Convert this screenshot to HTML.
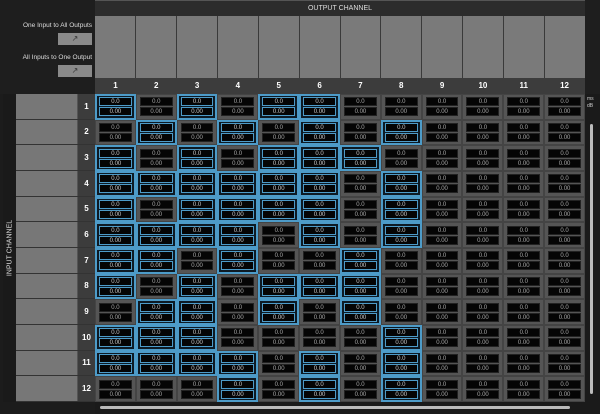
<!DOCTYPE html>
<html><head><style>
*{margin:0;padding:0;box-sizing:border-box}
body{width:600px;height:414px;background:#1c1c1c;font-family:"Liberation Sans",sans-serif;position:relative;overflow:hidden}
.a{position:absolute}
#tl{left:0;top:0;width:95px;height:94px;background:#1e1e1e}
.lbl{color:#ddd;font-size:6.5px;left:0;width:92px;text-align:right;white-space:nowrap}
.btn{width:34px;height:12px;background:#8a8a8a;left:58px;color:#333;font-size:8px;text-align:center;line-height:12px}
#hdr{left:95px;top:0;width:490px;height:16px;background:#2c2c2c;color:#ddd;font-size:7px;text-align:center;line-height:16px;border-top:1px solid #555}
#names{left:95px;top:16px;width:490px;height:62px;display:grid;grid-template-columns:repeat(12,1fr);gap:1px;background:#3a3a3a}
#names div{background:#7a7a7a}
#nums{left:95px;top:78px;width:490px;height:16px;display:grid;grid-template-columns:repeat(12,1fr);background:#3c3c3c;color:#fff;font-size:8px;font-weight:bold;text-align:center;line-height:16px}
#ic{left:3px;top:94px;width:13px;height:308px;background:#1a1a1a;color:#ddd;font-size:7px}
#ic span{position:absolute;left:50%;top:50%;transform:translate(-50%,-50%) rotate(-90deg);white-space:nowrap}
#rn{left:16px;top:94px;width:79px;height:308px;display:grid;grid-template-rows:repeat(12,1fr);background:#3c3c3c}
#rn div{display:flex;border-bottom:1px solid #333}
#rn div i{width:62px;background:#777;border-right:1px solid #555}
#rn div b{flex:1;color:#fff;font-size:8px;text-align:center;align-self:center}
#g{left:95px;top:94px;width:490px;height:308px;display:grid;grid-template-columns:repeat(12,1fr);grid-template-rows:repeat(12,1fr);background:#3a3a3a}
#g i{display:flex;flex-direction:column;justify-content:space-around;padding:2px 3px;background:#555;border:1px solid #444;font-style:normal}
#g b{display:block;background:#050505;height:9px;color:#aaa;font-size:6px;font-weight:normal;text-align:center;line-height:9px;border:1px solid #222}
#g i.s{background:#0d1a24;border:2px solid #4d9bc8;padding:1px 2px}
#g i.s b{border:1px solid #4d9bc8;color:#ccc}
#rs{left:585px;top:94px;width:15px;height:320px;background:#1a1a1a}
#bs{left:95px;top:402px;width:490px;height:12px;background:#1a1a1a}
</style></head><body>
<div class="a" id="tl"></div>
<div class="a lbl" style="top:22px">One Input to All Outputs</div>
<div class="a btn" style="top:33px">&#x2197;</div>
<div class="a lbl" style="top:54px">All Inputs to One Output</div>
<div class="a btn" style="top:65px">&#x2197;</div>
<div class="a" id="hdr">OUTPUT CHANNEL</div>
<div class="a" style="left:585px;top:0;width:15px;height:94px;background:#1e1e1e"></div>
<div class="a" id="names"><div></div><div></div><div></div><div></div><div></div><div></div><div></div><div></div><div></div><div></div><div></div><div></div></div>
<div class="a" id="nums"><div>1</div><div>2</div><div>3</div><div>4</div><div>5</div><div>6</div><div>7</div><div>8</div><div>9</div><div>10</div><div>11</div><div>12</div></div>
<div class="a" id="ic"><span>INPUT CHANNEL</span></div>
<div class="a" id="rn"><div><i></i><b>1</b></div><div><i></i><b>2</b></div><div><i></i><b>3</b></div><div><i></i><b>4</b></div><div><i></i><b>5</b></div><div><i></i><b>6</b></div><div><i></i><b>7</b></div><div><i></i><b>8</b></div><div><i></i><b>9</b></div><div><i></i><b>10</b></div><div><i></i><b>11</b></div><div><i></i><b>12</b></div></div>
<div class="a" id="g">
<i class=s><b>0.0</b><b>0.00</b></i><i><b>0.0</b><b>0.00</b></i><i class=s><b>0.0</b><b>0.00</b></i><i><b>0.0</b><b>0.00</b></i><i class=s><b>0.0</b><b>0.00</b></i><i class=s><b>0.0</b><b>0.00</b></i><i><b>0.0</b><b>0.00</b></i><i><b>0.0</b><b>0.00</b></i><i><b>0.0</b><b>0.00</b></i><i><b>0.0</b><b>0.00</b></i><i><b>0.0</b><b>0.00</b></i><i><b>0.0</b><b>0.00</b></i>
<i><b>0.0</b><b>0.00</b></i><i class=s><b>0.0</b><b>0.00</b></i><i><b>0.0</b><b>0.00</b></i><i class=s><b>0.0</b><b>0.00</b></i><i><b>0.0</b><b>0.00</b></i><i class=s><b>0.0</b><b>0.00</b></i><i><b>0.0</b><b>0.00</b></i><i class=s><b>0.0</b><b>0.00</b></i><i><b>0.0</b><b>0.00</b></i><i><b>0.0</b><b>0.00</b></i><i><b>0.0</b><b>0.00</b></i><i><b>0.0</b><b>0.00</b></i>
<i class=s><b>0.0</b><b>0.00</b></i><i><b>0.0</b><b>0.00</b></i><i class=s><b>0.0</b><b>0.00</b></i><i><b>0.0</b><b>0.00</b></i><i class=s><b>0.0</b><b>0.00</b></i><i class=s><b>0.0</b><b>0.00</b></i><i class=s><b>0.0</b><b>0.00</b></i><i><b>0.0</b><b>0.00</b></i><i><b>0.0</b><b>0.00</b></i><i><b>0.0</b><b>0.00</b></i><i><b>0.0</b><b>0.00</b></i><i><b>0.0</b><b>0.00</b></i>
<i class=s><b>0.0</b><b>0.00</b></i><i class=s><b>0.0</b><b>0.00</b></i><i class=s><b>0.0</b><b>0.00</b></i><i class=s><b>0.0</b><b>0.00</b></i><i class=s><b>0.0</b><b>0.00</b></i><i class=s><b>0.0</b><b>0.00</b></i><i><b>0.0</b><b>0.00</b></i><i class=s><b>0.0</b><b>0.00</b></i><i><b>0.0</b><b>0.00</b></i><i><b>0.0</b><b>0.00</b></i><i><b>0.0</b><b>0.00</b></i><i><b>0.0</b><b>0.00</b></i>
<i class=s><b>0.0</b><b>0.00</b></i><i><b>0.0</b><b>0.00</b></i><i class=s><b>0.0</b><b>0.00</b></i><i class=s><b>0.0</b><b>0.00</b></i><i class=s><b>0.0</b><b>0.00</b></i><i class=s><b>0.0</b><b>0.00</b></i><i><b>0.0</b><b>0.00</b></i><i class=s><b>0.0</b><b>0.00</b></i><i><b>0.0</b><b>0.00</b></i><i><b>0.0</b><b>0.00</b></i><i><b>0.0</b><b>0.00</b></i><i><b>0.0</b><b>0.00</b></i>
<i class=s><b>0.0</b><b>0.00</b></i><i class=s><b>0.0</b><b>0.00</b></i><i class=s><b>0.0</b><b>0.00</b></i><i class=s><b>0.0</b><b>0.00</b></i><i><b>0.0</b><b>0.00</b></i><i class=s><b>0.0</b><b>0.00</b></i><i><b>0.0</b><b>0.00</b></i><i class=s><b>0.0</b><b>0.00</b></i><i><b>0.0</b><b>0.00</b></i><i><b>0.0</b><b>0.00</b></i><i><b>0.0</b><b>0.00</b></i><i><b>0.0</b><b>0.00</b></i>
<i class=s><b>0.0</b><b>0.00</b></i><i class=s><b>0.0</b><b>0.00</b></i><i><b>0.0</b><b>0.00</b></i><i class=s><b>0.0</b><b>0.00</b></i><i><b>0.0</b><b>0.00</b></i><i><b>0.0</b><b>0.00</b></i><i class=s><b>0.0</b><b>0.00</b></i><i><b>0.0</b><b>0.00</b></i><i><b>0.0</b><b>0.00</b></i><i><b>0.0</b><b>0.00</b></i><i><b>0.0</b><b>0.00</b></i><i><b>0.0</b><b>0.00</b></i>
<i class=s><b>0.0</b><b>0.00</b></i><i><b>0.0</b><b>0.00</b></i><i class=s><b>0.0</b><b>0.00</b></i><i><b>0.0</b><b>0.00</b></i><i class=s><b>0.0</b><b>0.00</b></i><i class=s><b>0.0</b><b>0.00</b></i><i class=s><b>0.0</b><b>0.00</b></i><i><b>0.0</b><b>0.00</b></i><i><b>0.0</b><b>0.00</b></i><i><b>0.0</b><b>0.00</b></i><i><b>0.0</b><b>0.00</b></i><i><b>0.0</b><b>0.00</b></i>
<i><b>0.0</b><b>0.00</b></i><i class=s><b>0.0</b><b>0.00</b></i><i class=s><b>0.0</b><b>0.00</b></i><i><b>0.0</b><b>0.00</b></i><i class=s><b>0.0</b><b>0.00</b></i><i><b>0.0</b><b>0.00</b></i><i class=s><b>0.0</b><b>0.00</b></i><i><b>0.0</b><b>0.00</b></i><i><b>0.0</b><b>0.00</b></i><i><b>0.0</b><b>0.00</b></i><i><b>0.0</b><b>0.00</b></i><i><b>0.0</b><b>0.00</b></i>
<i class=s><b>0.0</b><b>0.00</b></i><i class=s><b>0.0</b><b>0.00</b></i><i class=s><b>0.0</b><b>0.00</b></i><i><b>0.0</b><b>0.00</b></i><i><b>0.0</b><b>0.00</b></i><i><b>0.0</b><b>0.00</b></i><i><b>0.0</b><b>0.00</b></i><i class=s><b>0.0</b><b>0.00</b></i><i><b>0.0</b><b>0.00</b></i><i><b>0.0</b><b>0.00</b></i><i><b>0.0</b><b>0.00</b></i><i><b>0.0</b><b>0.00</b></i>
<i class=s><b>0.0</b><b>0.00</b></i><i class=s><b>0.0</b><b>0.00</b></i><i class=s><b>0.0</b><b>0.00</b></i><i class=s><b>0.0</b><b>0.00</b></i><i><b>0.0</b><b>0.00</b></i><i class=s><b>0.0</b><b>0.00</b></i><i><b>0.0</b><b>0.00</b></i><i class=s><b>0.0</b><b>0.00</b></i><i><b>0.0</b><b>0.00</b></i><i><b>0.0</b><b>0.00</b></i><i><b>0.0</b><b>0.00</b></i><i><b>0.0</b><b>0.00</b></i>
<i><b>0.0</b><b>0.00</b></i><i><b>0.0</b><b>0.00</b></i><i><b>0.0</b><b>0.00</b></i><i class=s><b>0.0</b><b>0.00</b></i><i><b>0.0</b><b>0.00</b></i><i class=s><b>0.0</b><b>0.00</b></i><i><b>0.0</b><b>0.00</b></i><i class=s><b>0.0</b><b>0.00</b></i><i><b>0.0</b><b>0.00</b></i><i><b>0.0</b><b>0.00</b></i><i><b>0.0</b><b>0.00</b></i><i><b>0.0</b><b>0.00</b></i>
</div>
<div class="a" id="rs"></div>
<div class="a" style="left:587px;top:96px;color:#ccc;font-size:5px;line-height:7px">ms<br>dB</div>
<div class="a" style="left:590px;top:124px;width:3px;height:270px;background:#bbb;border-radius:2px"></div>
<div class="a" id="bs"></div>
<div class="a" style="left:100px;top:406px;width:470px;height:3px;background:#bbb;border-radius:2px"></div>
</body></html>
